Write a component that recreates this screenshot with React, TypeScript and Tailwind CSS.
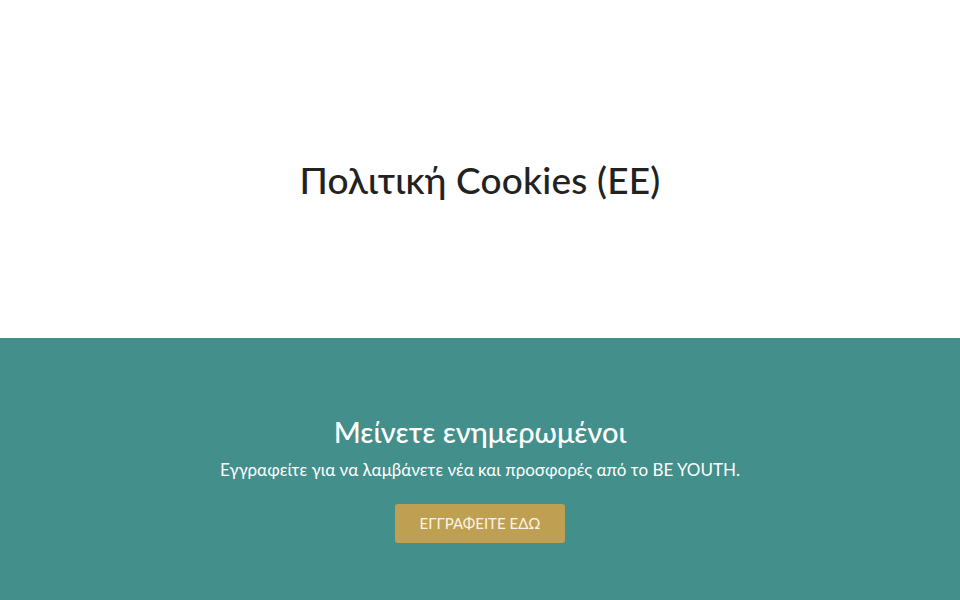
import React from "react";

const App = () => {
  return (
    <div className="flex min-h-screen flex-col bg-white font-['Lato','Noto_Sans',sans-serif]">
      <header className="flex h-[338px] items-center justify-center pt-[22px]">
        <h1 className="text-[37px] font-medium text-[#222222] tracking-[0.2px]">
          Πολιτική Cookies (ΕΕ)
        </h1>
      </header>

      <section className="flex flex-1 flex-col items-center bg-[#428f8b] pt-[76px] pb-16 text-white">
        <h2 className="text-[29px] font-medium leading-9">Μείνετε ενημερωμένοι</h2>
        <p className="mt-[8px] text-[17px] leading-6">
          Εγγραφείτε για να λαμβάνετε νέα και προσφορές από το BE YOUTH.
        </p>
        <button className="mt-[22px] h-[39px] w-[170px] rounded-[3px] bg-[#bfa052] text-[15px] text-[#fbf5e6]">
          ΕΓΓΡΑΦΕΙΤΕ ΕΔΩ
        </button>
      </section>
    </div>
  );
};

export default App;
